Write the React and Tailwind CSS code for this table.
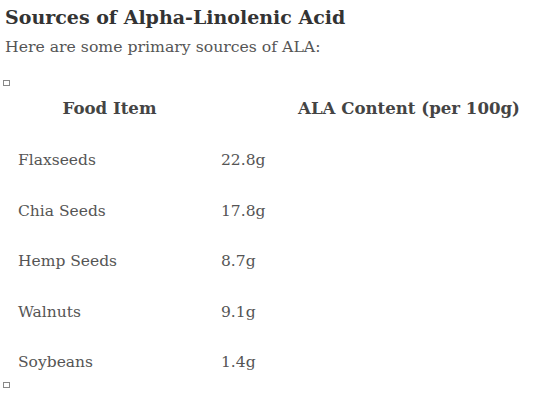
import React from "react";

const rows = [
  ["Flaxseeds", "22.8g"],
  ["Chia Seeds", "17.8g"],
  ["Hemp Seeds", "8.7g"],
  ["Walnuts", "9.1g"],
  ["Soybeans", "1.4g"],
];

export default function App() {
  return (
    <div
      className="w-[550px] h-[410px] overflow-hidden bg-white pl-[5px]"
      style={{ fontFamily: '"DejaVu Serif", "Liberation Serif", serif' }}
    >
      <h2 className="text-[19px] font-bold text-[#333] leading-[24px] pt-[5px]">
        Sources of Alpha-Linolenic Acid
      </h2>
      <p className="text-[15.7px] text-[#555] leading-[24px] mt-[6px]">
        Here are some primary sources of ALA:
      </p>
      <div className="w-[7px] h-[6px] border border-[#888] mt-[21px] -ml-[2px]" />
      <div className="ml-[3px] mt-[2px]">
        <div className="grid grid-cols-[203px_396px] h-[40px] items-center font-bold text-[16.6px] text-[#444]">
          <div className="text-center">Food Item</div>
          <div className="text-center">ALA Content (per 100g)</div>
        </div>
        <div className="flex flex-col gap-[10.5px] mt-[13px]">
          {rows.map(([name, val]) => (
            <div
              key={name}
              className="grid grid-cols-[203px_396px] h-[40px] items-center text-[15.5px] text-[#555]"
            >
              <div className="pl-[10px]">{name}</div>
              <div className="pl-[10px]">{val}</div>
            </div>
          ))}
        </div>
      </div>
      <div className="w-[7px] h-[6px] border border-[#888] -ml-[2px] -mt-[1px]" />
    </div>
  );
}
